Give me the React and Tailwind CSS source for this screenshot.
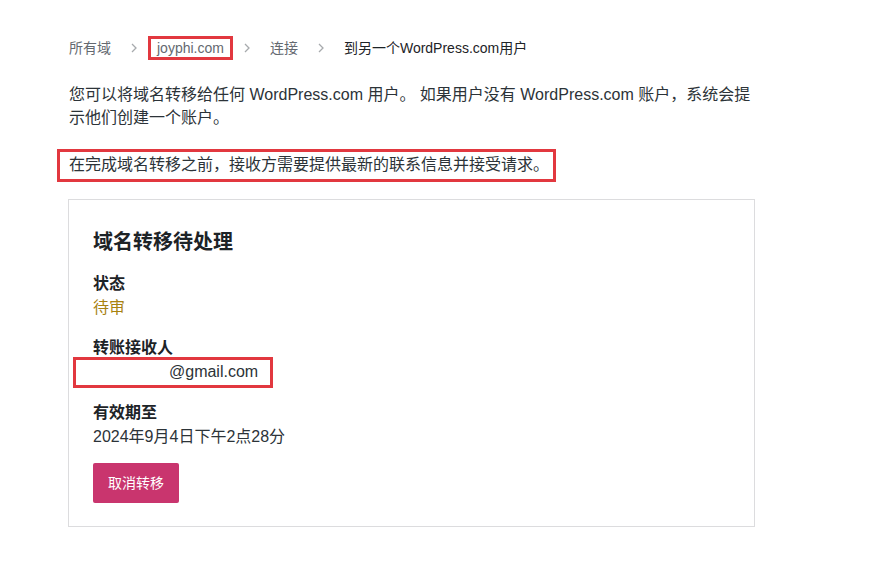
import React from "react";

function Chevron() {
  return (
    <svg width="8" height="12" viewBox="0 0 8 12" className="mx-[19px] shrink-0">
      <path d="M2 2l4 4-4 4" fill="none" stroke="#a7aaad" strokeWidth="1.3" />
    </svg>
  );
}

export default function App() {
  return (
    <div className="min-h-screen bg-white pl-[68px] pt-[36px] text-[#2c3338] font-['Liberation_Sans','Noto_Sans_CJK_SC',sans-serif]">
      {/* breadcrumb */}
      <nav className="flex items-center pl-[1px] text-[14px] leading-[18px]">
        <span className="text-[#646970]">所有域</span>
        <Chevron />
        <span className="-mx-[9px] border-[3px] border-[#e2383f] px-[6px] text-[#646970]">joyphi.com</span>
        <Chevron />
        <span className="text-[#646970]">连接</span>
        <Chevron />
        <span className="text-[#1d2327]">到另一个WordPress.com用户</span>
      </nav>

      <p className="mt-[23px] pl-[1px] text-[16px] leading-[23px]">
        您可以将域名转移给任何 WordPress.com 用户。 如果用户没有 WordPress.com 账户，系统会提
        <br />
        示他们创建一个账户。
      </p>

      <div className="mt-[20px]">
        <p className="-ml-[11px] w-fit border-[3px] border-[#e2383f] pl-[9px] pr-[4px] pt-[3px] pb-[4px] text-[16px] leading-[20px]">
          在完成域名转移之前，接收方需要提供最新的联系信息并接受请求。
        </p>
      </div>

      {/* card */}
      <div className="mt-[17px] w-[687px] border border-[#dcdcde] px-[24px] pt-[28px] pb-[23px]">
        <h2 className="text-[20px] font-bold leading-[28px] text-[#1d2327]">域名转移待处理</h2>

        <div className="mt-[16px] text-[16px] leading-[24px]">
          <p className="font-semibold text-[#1d2327]">状态</p>
          <p className="text-[#a8820f]">待审</p>
        </div>

        <div className="mt-[16px] text-[16px] leading-[24px]">
          <p className="font-semibold text-[#1d2327]">转账接收人</p>
          <p className="-ml-[20px] -mt-[3px] w-fit border-[3px] border-[#e2383f] pb-[1px] pl-[93px] pr-[12px]">@gmail.com</p>
        </div>

        <div className="mt-[13px] text-[16px] leading-[24px]">
          <p className="font-semibold text-[#1d2327]">有效期至</p>
          <p>2024年9月4日下午2点28分</p>
        </div>

        <button className="mt-[14px] h-[40px] rounded-[2px] bg-[#c9356e] px-[15px] text-[14px] text-white">
          取消转移
        </button>
      </div>
    </div>
  );
}
